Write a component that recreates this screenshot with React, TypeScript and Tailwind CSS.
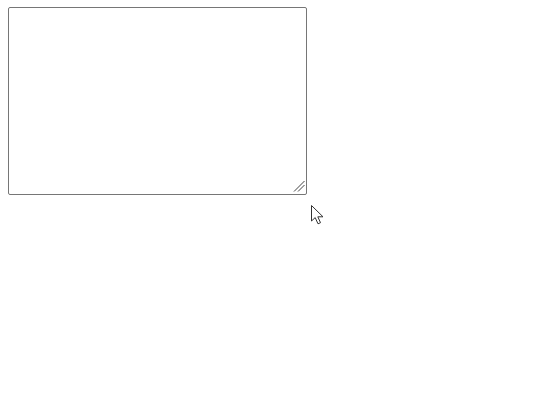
import React from "react";

export default function App() {
  return (
    <div className="relative w-[554px] h-[407px] bg-white" style={{ fontFamily: '"Liberation Sans", Arial, sans-serif' }}>
      <div className="pl-[8px] pt-[7px]">
        <div className="relative w-[299px] h-[188px]">
          <textarea className="block w-full h-full border border-[#767676] rounded-[2px] bg-white resize-none" />
          <svg className="absolute left-[284px] top-[172px] pointer-events-none" width="14" height="14" viewBox="0 0 14 14">
            <line x1="2" y1="12.5" x2="12.5" y2="2" stroke="#444" strokeWidth="1" />
            <line x1="6" y1="12.5" x2="12.5" y2="6" stroke="#444" strokeWidth="1" />
          </svg>
        </div>
      </div>
      <svg className="absolute left-[310px] top-[204px]" width="16" height="22" viewBox="0 0 16 22">
        <path d="M1.5 1.5 L1.5 17 L5.2 13.6 L8 19.8 L10.5 18.7 L7.8 12.8 L13 12.8 Z" fill="white" stroke="#333" strokeWidth="1" strokeLinejoin="round" />
      </svg>
    </div>
  );
}
